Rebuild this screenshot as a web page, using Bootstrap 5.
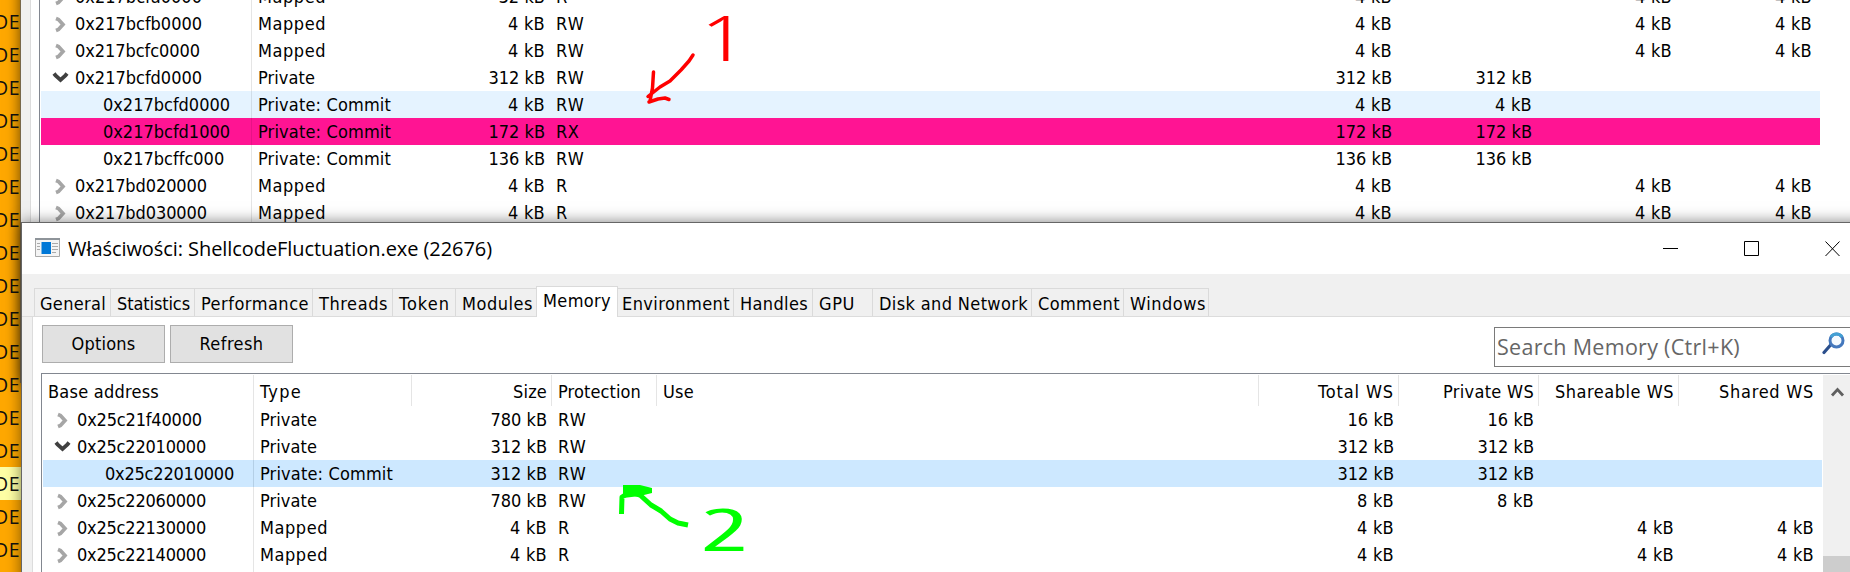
<!DOCTYPE html>
<html lang="pl">
<head>
<meta charset="utf-8">
<meta name="viewport" content="width=device-width, initial-scale=1">
<title>Właściwości: ShellcodeFluctuation.exe</title>
<link href="https://cdn.jsdelivr.net/npm/bootstrap@5.3.0/dist/css/bootstrap.min.css" rel="stylesheet">
<style>
body{width:1850px;height:572px;overflow:hidden;background:#ffa800;color:#000;font:18px/27px "DejaVu Sans Condensed","DejaVu Sans",sans-serif;font-stretch:condensed}
.desk{width:1850px;height:572px}
.proc{width:60px;margin-top:-28px;margin-left:-6px;font:19.5px/33px "Open Sans",sans-serif;color:#111;letter-spacing:.6px}
.proc div{height:33px;white-space:nowrap}
.proc .lit{background:#ffffa5}
.win{position:absolute;background:#f0f0f0;overflow:hidden}
.back-win{left:20px;top:-20px;width:1840px;height:403px;border:1px solid #77674a;box-shadow:0 0 13px rgba(0,0,0,.6);padding:0 0 0 9px}
.front-win{left:21px;top:222px;width:1850px;height:370px;border:1px solid #666;box-shadow:0 0 14px rgba(0,0,0,.5)}
.page-a{border-left:1px solid #dcdcdc;padding-left:8px;height:100%;background:#fff}
.list-a{border-left:1px solid #828790;padding:2px 0 0 1px;height:100%}
.list-a .grid-row{line-height:28px}
.grid-row{display:grid;grid-template-columns:210px 158px 140px 105px 602px 140px 140px 140px 144px;height:27px;width:1779px;white-space:nowrap}
.grid-row>div{height:27px;padding-left:7px}
.grid-row>div:first-child{border-right:0;padding-left:11px}
.grid-row>div:nth-child(2){border-left:1px solid #e5e5e5;padding-left:6px}
.grid-row>.num{text-align:right;padding:0 4px 0 0}
.grid-row>.num:last-child{padding-right:8px}
.hover-row{background:#e5f3ff}.rx-row{background:#ff1493}.sel-row{background:#cde8ff}
.hover-row>div:nth-child(2){border-color:#d0dde8!important}.sel-row>div:nth-child(2){border-color:#b4cfe6!important}.rx-row>div:nth-child(2){border-color:#e81286!important}
.twisty{width:17px;height:27px;flex:none;margin-right:6px}
.titlebar{height:51px;background:#fff;font:20px/52px "Open Sans",sans-serif;padding-left:13px}
.app-tabs{height:43px;padding:14px 0 0 12px;border-bottom:1px solid #dcdcdc;margin-left:0}
.app-tab{height:28px;border:1px solid #dadada;border-left-width:0;border-bottom:0;padding:1px 0 0 6px;line-height:27px;white-space:nowrap}
.app-tab:first-child{border-left-width:1px;padding-left:5px}
.app-tab.on{height:31px;margin-top:-2px;background:#fff;border-left-width:1px;margin-left:-1px;padding-left:6px;position:relative;line-height:26px}
.page-b{margin-left:10px;border-left:1px solid #dcdcdc;background:#fff;height:255px;padding:8px 0 0 8px}
.tool{width:123px;height:38px;border:1px solid #adadad;background:#e1e1e1;border-radius:0;padding:0;font:inherit;line-height:36px;color:#000}
.search{margin-top:2px;width:400px;height:40px;border:1px solid #7a7a7a;font:21.5px/37px "Open Sans",sans-serif;color:#666;padding-left:2px;white-space:nowrap}
.list-b{border:1px solid #828790;border-right:0;margin-top:6px;padding:1px 0 0 1px;height:230px}
.head-row{height:31px;line-height:33px}
.list-b .grid-row:not(.head-row){line-height:28px}
.head-row>div{height:31px;border-left:1px solid #e5e5e5;padding-left:6px}
.grid-row.head-row>div:first-child{border-left:0;padding-left:5px}
.head-row>div.num:nth-child(3),.head-row>div:nth-child(n+6){border-left:1px solid #e5e5e5}
.scroll-b{width:30px;height:230px;background:#f0f0f0;margin-left:1px}
.thumb{background:#cdcdcd;height:40px;margin-top:149px}
.ink{position:absolute;left:0;top:0;pointer-events:none}
[data-w]{display:inline-block}
</style>
<script src="https://cdn.jsdelivr.net/npm/bootstrap@5.3.0/dist/js/bootstrap.bundle.min.js"></script>
</head>
<body>
<div class="desk position-relative overflow-hidden">
  <div class="proc" id="proc"></div>

  <section class="win back-win"><div class="page-a"><div class="list-a" id="listA"></div></div></section>

  <section class="win front-win">
    <header class="titlebar d-flex">
      <svg width="25" height="20" viewBox="0 0 25 20" style="margin:15px 8px 0 0"><path fill="#f4f4f4" stroke="#a9a9a9" d="M.5 .5h24v18H.5z"/><path fill="#8e9499" d="M0 0h25v2H0z"/><path stroke="#aaa" d="M2 5.500h3M2 8.500h3M2 11.500h3M17 5.500h6M17 8.500h6M17 11.500h6M17 14.500h4"/><path fill="#0078d7" d="M6.500 4h9.500v12H6.500z"/></svg>
      <span><span data-w="424">Właściwości: ShellcodeFluctuation.exe (22676)</span></span>
      <svg class="ink" style="left:1623px" width="227" height="51" fill="none" stroke="#000"><path d="M18 25.500h15M99.500 18.500h14v14h-14z"/><path d="M180.500 18.500l14 14.500M194.500 18.500l-14 14.500"/></svg>
    </header>
    <nav class="app-tabs d-flex" id="tabs"></nav>
    <main class="page-b">
      <div class="d-flex">
        <div style="margin-left:1px"><button class="btn tool"><span data-w="64">Options</span></button></div>
        <div style="margin-left:5px"><button class="btn tool"><span data-w="64">Refresh</span></button></div>
        <div class="search" style="margin-left:1201px"><span data-w="243">Search Memory (Ctrl+K)</span>
          <svg width="24" height="24" viewBox="0 0 24 24" style="margin:-11px 0 0 76px"><path d="M2 20.500l7-8" stroke="#2b4f8c" stroke-width="3.200" stroke-linecap="round"/><circle cx="14.500" cy="8.500" r="6.500" fill="#f4faff" stroke="#4478bd" stroke-width="3"/><path d="M9 5a6.500 6.500 0 0 1 11 0" fill="none" stroke="#43a0d4" stroke-width="3"/></svg>
        </div>
      </div>
      <div class="list-b d-flex">
        <div id="listB"></div>
        <div class="scroll-b"><svg class="d-block" width="27" height="32"><path d="M9 20.500l5.500-6 5.500 6" fill="none" stroke="#606060" stroke-width="2.800"/></svg><div class="thumb"></div></div>
      </div>
    </main>
  </section>

  <svg class="ink" width="1850" height="572" fill="none" stroke-linecap="round" stroke-linejoin="round">
    <g stroke="#f00" stroke-width="3.500"><path d="M693 55L689 61 681 70 670 81 660 87 648 96.500M653.500 72L652.500 88 650 101M649 102l9-3 7-1 4 1.500"/></g>
    <path stroke="#0f0" stroke-width="5" stroke-linecap="butt" d="M621.500 514L622 497 630 492 640 495 651 505 661 511 670 519 678 523 688 525"/>
    <path fill="#0f0" d="M623 485h17l12 3v5l-12 3-17 2z"/>
    <text transform="translate(701 61) scale(1.700 1)" font-family="Open Sans" font-weight="300" font-size="62" fill="#f00">1</text>
    <text transform="translate(701 551) scale(1.900 1)" font-family="Open Sans" font-size="59" fill="#0f0">2</text>
  </svg>
</div>
<script>
const widths = {"4 kB":37,"8 kB":37,"16 kB":46.5,"32 kB":46.5,"312 kB":56.5,"172 kB":56.5,"136 kB":56.5,"780 kB":56.5,"RW":29,"R":12,"RX":23.5,
 "Private":57,"Mapped":68,"Private: Commit":133,"0x217bcfa0000":127,"0x217bcfb0000":127,"0x217bcfc0000":125,"0x217bcfd0000":127,"0x217bcfd1000":127,"0x217bcffc000":121,
 "0x217bd020000":132,"0x217bd030000":132,"0x25c21f40000":125};
const txt = (t,w) => t ? `<span data-w="${w||widths[t]||129}">${t}</span>` : "";
const icons = {
 c:'<svg class="twisty" viewBox="0 0 17 27"><path d="M4 8.500l2.500 1 4.500 5-4.500 5-2.500 1" fill="none" stroke="#a6a6a6" stroke-width="3.700"/></svg>',
 o:'<svg class="twisty" viewBox="0 0 17 27"><path d="M2 9.500l1.500 2 5 4.500 5-4.500 1.500-2" fill="none" stroke="#404040" stroke-width="3.800"/></svg>'};
// kind (c: collapsed, o: open, l: child), address, type, size, protection, total, private, shareable, shared, row class
function row(r){
  const [k,a,t,s,p,tw,pw,sh,sd,cls] = r;
  const pad = k==="l" ? '<span style="display:inline-block;width:51px"></span>' : icons[k];
  return `<div class="grid-row ${cls||""}"><div class="d-flex">${pad}${txt(a)}</div><div>${txt(t)}</div><div class="num">${txt(s)}</div><div>${txt(p)}</div><div></div>`+
    [tw,pw,sh,sd].map(v=>`<div class="num">${txt(v)}</div>`).join("")+"</div>";
}
const m="Mapped",q="Private",pc="Private: Commit",f="4 kB";
listA.innerHTML=[
 ["c","0x217bcfa0000",m,"32 kB","R",f,"",f,f],["c","0x217bcfb0000",m,f,"RW",f,"",f,f],["c","0x217bcfc0000",m,f,"RW",f,"",f,f],
 ["o","0x217bcfd0000",q,"312 kB","RW","312 kB","312 kB"],["l","0x217bcfd0000",pc,f,"RW",f,f,"","","hover-row"],
 ["l","0x217bcfd1000",pc,"172 kB","RX","172 kB","172 kB","","","rx-row"],["l","0x217bcffc000",pc,"136 kB","RW","136 kB","136 kB"],
 ["c","0x217bd020000",m,f,"R",f,"",f,f],["c","0x217bd030000",m,f,"R",f,"",f,f]].map(row).join("");
const head=[["Base address",111],["Type",42],["Size",34,1],["Protection",83],["Use",31],["Total WS",76,1],["Private WS",91,1],["Shareable WS",119,1],["Shared WS",95,1]];
listB.innerHTML='<div class="grid-row head-row">'+head.map(h=>`<div class="${h[2]?"num":""}">${txt(h[0],h[1])}</div>`).join("")+"</div>"+[
 ["c","0x25c21f40000",q,"780 kB","RW","16 kB","16 kB"],["o","0x25c22010000",q,"312 kB","RW","312 kB","312 kB"],
 ["l","0x25c22010000",pc,"312 kB","RW","312 kB","312 kB","","","sel-row"],["c","0x25c22060000",q,"780 kB","RW","8 kB","8 kB"],
 ["c","0x25c22130000",m,f,"R",f,"",f,f],["c","0x25c22140000",m,f,"R",f,"",f,f]].map(row).join("")+
 '<div class="grid-row"><div></div><div></div></div>';
// label, tab width, label width
tabs.innerHTML=[["General",77,66],["Statistics",84,73],["Performance",118,108],["Threads",80,69],["Token",63,51],["Modules",81,71],["Memory",82,68],["Environment",116,108],
 ["Handles",79,68],["GPU",60,36],["Disk and Network",159,149],["Comment",92,82],["Windows",85,76]]
 .map(t=>`<div class="app-tab${t[0]==="Memory"?" on":""}" style="width:${t[1]}px${t[0]==="Environment"?";padding-left:4px":""}">${txt(t[0],t[2])}</div>`).join("");
// rows beside the rear window show less of the name than those below it
for(let i=0;i<19;i++) proc.insertAdjacentHTML("beforeend",`<div class="${i===15?"lit":""}">${i<13?"DE":"DES"}</div>`);
// spread each label's letters over its set width
document.querySelectorAll("[data-w]").forEach(e=>{
  e.style.letterSpacing=((+e.dataset.w-e.getBoundingClientRect().width)/e.textContent.length).toFixed(3)+"px";
});
</script>
</body>
</html>
